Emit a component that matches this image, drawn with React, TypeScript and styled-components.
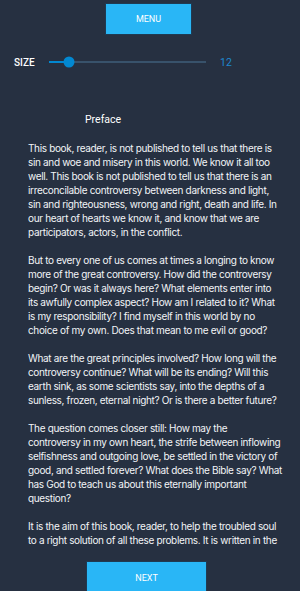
import { createGlobalStyle } from "styled-components";
import styled from "styled-components";

const GlobalStyle = createGlobalStyle`
  html, body {
    margin: 0;
    padding: 0;
    background: #263041;
  }
  body {
    font-family: Roboto, "Liberation Sans", sans-serif;
  }
`;

const paragraphs = [
  "This book, reader, is not published to tell us that there is sin and woe and misery in this world. We know it all too well. This book is not published to tell us that there is an irreconcilable controversy between darkness and light, sin and righteousness, wrong and right, death and life. In our heart of hearts we know it, and know that we are participators, actors, in the conflict.",
  "But to every one of us comes at times a longing to know more of the great controversy. How did the controversy begin? Or was it always here? What elements enter into its awfully complex aspect? How am I related to it? What is my responsibility? I find myself in this world by no choice of my own. Does that mean to me evil or good?",
  "What are the great principles involved? How long will the controversy continue? What will be its ending? Will this earth sink, as some scientists say, into the depths of a sunless, frozen, eternal night? Or is there a better future?",
  "The question comes closer still: How may the controversy in my own heart, the strife between inflowing selfishness and outgoing love, be settled in the victory of good, and settled forever? What does the Bible say? What has God to teach us about this eternally important question?",
  "It is the aim of this book, reader, to help the troubled soul to a right solution of all these problems. It is written in the midst of the controversy, by one who has felt its sorrow and its power.",
];

function App() {
  const size = 12;
  const percent = ((size - 10) / 16) * 100;

  return (
    <>
      <GlobalStyle />
      <Screen>
        <TopButton>MENU</TopButton>
        <SizeRow>
          <SizeLabel>SIZE</SizeLabel>
          <Slider>
            <ActiveTrack style={{ width: `${percent}%` }} />
            <Thumb style={{ left: `${percent}%` }} />
          </Slider>
          <SizeValue>{size}</SizeValue>
        </SizeRow>
        <ReadingPane>
          <Title>Preface</Title>
          {paragraphs.map((p, i) => (
            <Paragraph key={i}>{p}</Paragraph>
          ))}
        </ReadingPane>
        <BottomButton>NEXT</BottomButton>
      </Screen>
    </>
  );
}

const Screen = styled.div`
  display: flex;
  flex-direction: column;
  align-items: center;
  width: 300px;
  height: 591px;
  overflow: hidden;
  background: #263041;
  color: #ffffff;
`;

const TopButton = styled.div`
  display: flex;
  align-items: center;
  justify-content: center;
  flex-shrink: 0;
  box-sizing: border-box;
  width: 87px;
  height: 32px;
  margin-top: 3px;
  margin-left: -3px;
  background: #29b6f6;
  border: 1px solid #1f3a52;
  font-size: 9px;
  color: #ffffff;
`;

const SizeRow = styled.div`
  display: flex;
  align-items: center;
  align-self: stretch;
  flex-shrink: 0;
  height: 20px;
  margin-top: 17px;
  padding-left: 14px;
`;

const SizeLabel = styled.span`
  width: 35px;
  font-size: 10px;
  font-weight: 500;
  color: #ffffff;
`;

const Slider = styled.div`
  position: relative;
  width: 157px;
  height: 2px;
  background: #38526b;
`;

const ActiveTrack = styled.div`
  height: 2px;
  background: #0288d1;
`;

const Thumb = styled.div`
  position: absolute;
  top: 50%;
  width: 11px;
  height: 11px;
  border-radius: 50%;
  background: #0288d1;
  transform: translate(-50%, -50%);
`;

const SizeValue = styled.span`
  margin-left: 14px;
  font-size: 10.5px;
  color: #1e88d0;
`;

const ReadingPane = styled.div`
  flex: 1;
  align-self: stretch;
  overflow: hidden;
  margin-top: 41px;
  padding: 0 18px 0 28px;
  min-height: 0;
`;

const Title = styled.div`
  height: 14px;
  padding-left: 57px;
  margin-bottom: 14px;
  font-size: 10.5px;
  line-height: 14px;
`;

const Paragraph = styled.p`
  margin: 0 0 14px;
  font-family: Inter, Roboto, sans-serif;
  font-size: 10px;
  line-height: 14px;
  letter-spacing: -0.34px;
  color: #f2f4f7;
`;

const BottomButton = styled.div`
  display: flex;
  align-items: center;
  justify-content: center;
  flex-shrink: 0;
  box-sizing: border-box;
  width: 121px;
  height: 30px;
  margin-top: 15px;
  margin-left: -7px;
  padding-top: 2px;
  background: #29b6f6;
  border: 1px solid #1f3a52;
  border-bottom: none;
  font-size: 9px;
  color: #ffffff;
`;

export default App;
